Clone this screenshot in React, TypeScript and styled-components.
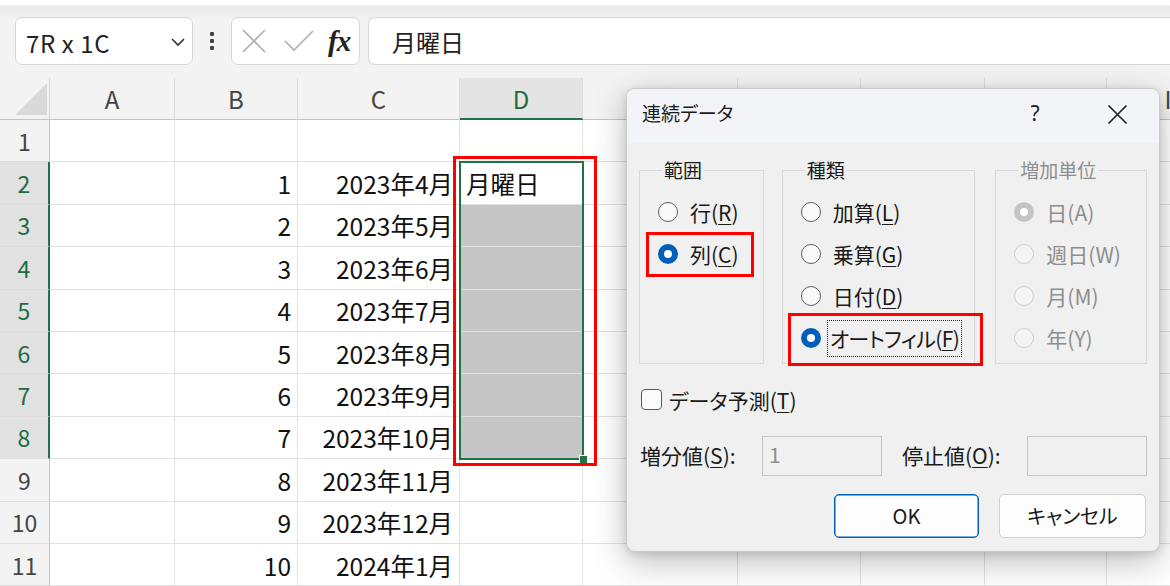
import React from "react";
import styled, { createGlobalStyle, css } from "styled-components";

const GlobalStyle = createGlobalStyle`
  html, body {
    margin: 0;
    padding: 0;
  }
  body {
    font-family: "Noto Sans CJK JP", "Noto Sans", sans-serif;
    background: #f3f3f3;
  }
  * {
    box-sizing: border-box;
  }
`;

const Page = styled.div`
  position: relative;
  width: 1170px;
  height: 586px;
  overflow: hidden;
  background: #f3f3f3;
`;

/* ---------- formula bar ---------- */

const TopBar = styled.div`
  height: 78px;
  display: flex;
  align-items: flex-start;
  padding: 17px 0 0 15px;
  background: linear-gradient(#ffffff 0 5px, #e9e9e9 6px, #f3f3f3 20px);
`;

const NameBox = styled.div`
  width: 178px;
  height: 48px;
  flex: none;
  background: #fff;
  border: 1px solid #d6d6d6;
  border-radius: 7px;
  display: flex;
  align-items: center;
  justify-content: space-between;
  padding: 2px 6px 0 10px;
  font-size: 24px;
  letter-spacing: 0.6px;
  color: #222;
`;

const DotsWrap = styled.div`
  width: 38px;
  height: 48px;
  flex: none;
  display: flex;
  flex-direction: column;
  align-items: center;
  justify-content: center;
  gap: 3px;
`;

const Dot = styled.span`
  width: 4px;
  height: 4px;
  background: #444;
  border-radius: 1px;
`;

const FxBox = styled.div`
  width: 129px;
  height: 48px;
  flex: none;
  background: #fff;
  border: 1px solid #d6d6d6;
  border-radius: 7px;
  display: flex;
  align-items: center;
  padding: 0 8px 0 9px;
  gap: 17px;
`;

const FxText = styled.span`
  font-family: "Liberation Serif", "DejaVu Serif", serif;
  font-style: italic;
  font-weight: 700;
  font-size: 29px;
  color: #222;
  margin-left: -3px;
  letter-spacing: -1px;
`;

const FormulaInput = styled.div`
  flex: 1;
  height: 48px;
  margin-left: 8px;
  background: #fff;
  border: 1px solid #d6d6d6;
  border-right: none;
  border-radius: 7px 0 0 7px;
  display: flex;
  align-items: center;
  padding: 0 0 0 23px;
  font-size: 24px;
  color: #222;
`;

/* ---------- sheet ---------- */

const colWidths = [125, 123, 162, 123, 155, 123, 124, 122, 123];
const colNames = ["A", "B", "C", "D", "E", "F", "G", "H", "I"];
// E..H sit under the dialog, only their frames show
const hiddenCols = ["E", "F", "G", "H"];

const SheetArea = styled.div`
  position: relative;
`;

const Sheet = styled.div`
  display: grid;
  grid-template-columns: 50px ${colWidths.map((w) => `${w}px`).join(" ")};
  grid-template-rows: 42px repeat(11, 42.4px);
  background: #fff;
`;

const Corner = styled.div`
  background: #f3f3f3;
  border-right: 1px solid #d4d4d4;
  border-bottom: 1px solid #c4c4c4;
`;

const ColHeader = styled.div<{ $active?: boolean }>`
  background: ${(p) => (p.$active ? "#e4e4e4" : "#f3f3f3")};
  border-right: 1px solid #dcdcdc;
  border-bottom: ${(p) => (p.$active ? "2px solid #217346" : "1px solid #c4c4c4")};
  display: flex;
  align-items: center;
  justify-content: center;
  font-size: 24px;
  color: ${(p) => (p.$active ? "#1e6b41" : "#444")};
`;

const RowHeader = styled.div<{ $active?: boolean }>`
  background: ${(p) => (p.$active ? "#e1e1e1" : "#f3f3f3")};
  border-right: ${(p) => (p.$active ? "2px solid #217346" : "1px solid #c4c4c4")};
  border-bottom: 1px solid #dcdcdc;
  display: flex;
  align-items: center;
  justify-content: center;
  font-size: 23px;
  color: ${(p) => (p.$active ? "#1e6b41" : "#444")};
`;

const Cell = styled.div<{ $right?: boolean; $shade?: boolean }>`
  background: ${(p) => (p.$shade ? "#c6c6c6" : "#fff")};
  border-right: 1px solid #e1e1e1;
  border-bottom: 1px solid #e1e1e1;
  display: flex;
  align-items: center;
  justify-content: ${(p) => (p.$right ? "flex-end" : "flex-start")};
  padding: 1px 6px 0 6px;
  font-size: 24.5px;
  color: #111;
  white-space: nowrap;
  overflow: hidden;
`;

const Selection = styled.div`
  position: absolute;
  left: 459px;
  top: 83px;
  width: 125px;
  height: 299px;
  border: 2px solid #217346;
  pointer-events: none;
`;

const FillHandle = styled.div`
  position: absolute;
  right: -6px;
  bottom: -6px;
  width: 9px;
  height: 9px;
  background: #217346;
  border: 1px solid #fff;
`;

const RedFrame = styled.div`
  position: absolute;
  left: 453px;
  top: 78px;
  width: 144px;
  height: 310px;
  border: 3px solid #ff0000;
  pointer-events: none;
`;

/* ---------- dialog ---------- */

const Dialog = styled.div`
  position: absolute;
  left: 626px;
  top: 88px;
  width: 534px;
  height: 464px;
  border: 1px solid #c9c9c9;
  border-radius: 9px;
  background: #f0f0f0;
  box-shadow: 0 10px 34px rgba(0, 0, 0, 0.26), 0 2px 8px rgba(0, 0, 0, 0.12);
  overflow: hidden;
  font-feature-settings: "palt";
  color: #1a1a1a;
`;

const TitleBar = styled.div`
  height: 54px;
  background: #f3f4f8;
  display: flex;
  align-items: center;
  padding: 0 0 7px 15px;
`;

const Title = styled.div`
  flex: 1;
  font-size: 19px;
`;

const HelpMark = styled.div`
  width: 40px;
  text-align: center;
  font-size: 21px;
  font-family: "Noto Sans", sans-serif;
  color: #222;
  margin-right: 20px;
`;

const CloseButton = styled.div`
  width: 84px;
  display: flex;
  justify-content: center;
  padding-top: 3px;
`;

const Body = styled.div`
  padding: 15px 12px 14px 12px;
  display: flex;
  flex-direction: column;
`;

const Groups = styled.div`
  display: flex;
  align-items: stretch;
`;

const Group = styled.fieldset<{ $width: number; $gap: number }>`
  margin: 0 0 0 ${(p) => p.$gap}px;
  width: ${(p) => p.$width}px;
  min-width: 0;
  padding: 9px 0 4px 18px;
  border: 1px solid #d9d9d9;
  display: flex;
  flex-direction: column;
`;

const Legend = styled.legend<{ $disabled?: boolean }>`
  padding: 0 2px;
  margin-left: 4px;
  font-size: 19px;
  line-height: 24px;
  color: ${(p) => (p.$disabled ? "#8e8e8e" : "#1a1a1a")};
`;

type MarkKind = "col" | "fill";

const markCss = {
  col: css`
    left: -12px;
    top: -1px;
    width: 102px;
    height: 39px;
  `,
  fill: css`
    left: -13px;
    top: -4px;
    width: 189px;
    height: 47px;
  `,
};

const RadioRow = styled.div<{ $disabled?: boolean; $mark?: MarkKind }>`
  position: relative;
  height: 42px;
  display: flex;
  align-items: center;
  gap: 9px;
  font-size: 21px;
  color: ${(p) => (p.$disabled ? "#8e8e8e" : "#1a1a1a")};
  ${(p) =>
    p.$mark &&
    css`
      &::after {
        content: "";
        position: absolute;
        border: 3px solid #ff0000;
        ${markCss[p.$mark]}
      }
    `}
`;

const RadioCircle = styled.span<{ $checked?: boolean; $disabled?: boolean }>`
  width: 20px;
  height: 20px;
  flex: none;
  border-radius: 50%;
  position: relative;
  ${(p) =>
    p.$checked
      ? css`
          background: ${p.$disabled ? "#c4c4c4" : "#005fb8"};
          &::after {
            content: "";
            position: absolute;
            left: 6px;
            top: 6px;
            width: 8px;
            height: 8px;
            border-radius: 50%;
            background: #fff;
          }
        `
      : css`
          background: ${p.$disabled ? "#f4f4f4" : "#f9f9f9"};
          border: 1px solid ${p.$disabled ? "#cdcdcd" : "#5f5f5f"};
        `}
`;

const FocusLabel = styled.span<{ $focus?: boolean }>`
  display: flex;
  align-items: center;
  height: 37px;
  padding: 0 2px;
  margin-left: ${(p) => (p.$focus ? "-3px" : "0")};
  letter-spacing: ${(p) => (p.$focus ? "-0.6px" : "0")};
  border: 1px ${(p) => (p.$focus ? "dotted #222" : "solid transparent")};
`;

const U = styled.u`
  text-underline-offset: 3px;
  text-decoration-thickness: 1px;
`;

const CheckRow = styled.div`
  margin-top: 25px;
  height: 21px;
  display: flex;
  align-items: center;
  gap: 7px;
  font-size: 21px;
  padding-left: 2px;
`;

const CheckBox = styled.span`
  width: 21px;
  height: 21px;
  border: 1px solid #5a5a5a;
  border-radius: 4px;
  background: #fbfbfb;
`;

const FieldRow = styled.div`
  margin-top: 26px;
  height: 40px;
  display: grid;
  grid-template-columns: 123px 120px 145px 120px;
  align-items: center;
  font-size: 21px;
`;

const FieldLabel = styled.div<{ $indent?: number }>`
  padding-left: ${(p) => p.$indent ?? 1}px;
  padding-bottom: 2px;
  white-space: nowrap;
`;

const TextBox = styled.div`
  height: 40px;
  border: 1px solid #c4c4c4;
  background: #f0f0f0;
  padding: 0 6px 4px;
  display: flex;
  align-items: center;
  font-size: 21px;
  color: #8e8e8e;
`;

const ButtonRow = styled.div`
  margin-top: 18px;
  display: flex;
  justify-content: flex-end;
  gap: 20px;
  padding-right: 1px;
`;

const Button = styled.div<{ $primary?: boolean; $width: number }>`
  width: ${(p) => p.$width}px;
  height: 44px;
  background: #fdfdfd;
  border: 1px solid ${(p) => (p.$primary ? "#005fb8" : "#d1d1d1")};
  box-shadow: ${(p) => (p.$primary ? "inset 0 0 0 0.5px #005fb8" : "none")};
  border-radius: 5px;
  display: flex;
  align-items: center;
  justify-content: center;
  padding-bottom: 2px;
  font-size: 20px;
  color: #1a1a1a;
`;

/* ---------- data ---------- */

const months = [
  "2023年4月",
  "2023年5月",
  "2023年6月",
  "2023年7月",
  "2023年8月",
  "2023年9月",
  "2023年10月",
  "2023年11月",
  "2023年12月",
  "2024年1月",
];

const Chevron = () => (
  <svg width="16" height="10" viewBox="0 0 16 10">
    <polyline points="2,2 8,8 14,2" fill="none" stroke="#333" strokeWidth="1.6" />
  </svg>
);

const CancelIcon = () => (
  <svg width="26" height="26" viewBox="0 0 26 26">
    <path d="M2 2 L24 24 M24 2 L2 24" stroke="#b0b0b0" strokeWidth="1.6" fill="none" />
  </svg>
);

const EnterIcon = () => (
  <svg width="30" height="22" viewBox="0 0 30 22">
    <polyline points="1,11 10,20 29,1" fill="none" stroke="#b0b0b0" strokeWidth="1.6" />
  </svg>
);

const CloseIcon = () => (
  <svg width="21" height="21" viewBox="0 0 21 21">
    <path d="M1.5 1.5 L19.5 19.5 M19.5 1.5 L1.5 19.5" stroke="#222" strokeWidth="1.7" fill="none" />
  </svg>
);

const CornerTriangle = () => (
  <svg width="50" height="42" viewBox="0 0 50 42" style={{ display: "block" }}>
    <polygon points="47,5 47,37 15,37" fill="#d9d9d9" />
  </svg>
);

function cellContent(row: number, col: number) {
  if (col === 1 && row >= 2) return { text: String(row - 1), right: true };
  if (col === 2 && row >= 2) return { text: months[row - 2], right: true };
  if (col === 3 && row === 2) return { text: "月曜日", right: false };
  return { text: "", right: false };
}

interface RadioProps {
  label: React.ReactNode;
  checked?: boolean;
  disabled?: boolean;
  mark?: MarkKind;
  focus?: boolean;
}

const Radio = ({ label, checked, disabled, mark, focus }: RadioProps) => (
  <RadioRow $disabled={disabled} $mark={mark}>
    <RadioCircle $checked={checked} $disabled={disabled} />
    <FocusLabel $focus={focus}>{label}</FocusLabel>
  </RadioRow>
);

const SeriesDialog = () => (
  <Dialog>
    <TitleBar>
      <Title>連続データ</Title>
      <HelpMark>?</HelpMark>
      <CloseButton>
        <CloseIcon />
      </CloseButton>
    </TitleBar>
    <Body>
      <Groups>
        <Group $width={125} $gap={0}>
          <Legend>範囲</Legend>
          <Radio label={<>行(<U>R</U>)</>} />
          <Radio label={<>列(<U>C</U>)</>} checked mark="col" />
        </Group>
        <Group $width={194} $gap={18}>
          <Legend>種類</Legend>
          <Radio label={<>加算(<U>L</U>)</>} />
          <Radio label={<>乗算(<U>G</U>)</>} />
          <Radio label={<>日付(<U>D</U>)</>} />
          <Radio label={<>オートフィル(<U>F</U>)</>} checked mark="fill" focus />
        </Group>
        <Group $width={152} $gap={20}>
          <Legend $disabled>増加単位</Legend>
          <Radio label="日(A)" checked disabled />
          <Radio label="週日(W)" disabled />
          <Radio label="月(M)" disabled />
          <Radio label="年(Y)" disabled />
        </Group>
      </Groups>
      <CheckRow>
        <CheckBox />
        <span>
          データ予測(<U>T</U>)
        </span>
      </CheckRow>
      <FieldRow>
        <FieldLabel>
          増分値(<U>S</U>):
        </FieldLabel>
        <TextBox>1</TextBox>
        <FieldLabel $indent={20}>
          停止値(<U>O</U>):
        </FieldLabel>
        <TextBox />
      </FieldRow>
      <ButtonRow>
        <Button $primary $width={145}>
          OK
        </Button>
        <Button $width={147}>キャンセル</Button>
      </ButtonRow>
    </Body>
  </Dialog>
);

export default function App() {
  const rows = Array.from({ length: 11 }, (_, i) => i + 1);
  return (
    <Page>
      <GlobalStyle />
      <TopBar>
        <NameBox>
          <span>7R x 1C</span>
          <Chevron />
        </NameBox>
        <DotsWrap>
          <Dot />
          <Dot />
          <Dot />
        </DotsWrap>
        <FxBox>
          <CancelIcon />
          <EnterIcon />
          <FxText>fx</FxText>
        </FxBox>
        <FormulaInput>月曜日</FormulaInput>
      </TopBar>
      <SheetArea>
        <Sheet>
          <Corner>
            <CornerTriangle />
          </Corner>
          {colNames.map((c) => (
            <ColHeader key={c} $active={c === "D"}>
              {hiddenCols.includes(c) ? "" : c}
            </ColHeader>
          ))}
          {rows.map((r) => (
            <React.Fragment key={r}>
              <RowHeader $active={r >= 2 && r <= 8}>{r}</RowHeader>
              {colNames.map((c, ci) => {
                const content = cellContent(r, ci);
                return (
                  <Cell key={c} $right={content.right} $shade={ci === 3 && r >= 3 && r <= 8}>
                    {content.text}
                  </Cell>
                );
              })}
            </React.Fragment>
          ))}
        </Sheet>
        <Selection>
          <FillHandle />
        </Selection>
        <RedFrame />
      </SheetArea>
      <SeriesDialog />
    </Page>
  );
}
